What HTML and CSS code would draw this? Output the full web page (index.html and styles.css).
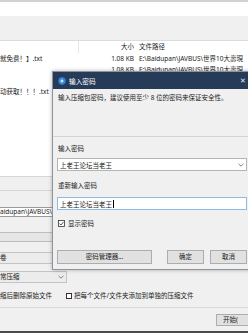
FILE: index.html
```html
<!DOCTYPE html>
<html lang="zh-CN">
<head>
<meta charset="utf-8">
<title>输入密码</title>
<link rel="stylesheet" href="styles.css">
</head>
<body>
<div class="app">
  <div class="top-strip"></div>
  <div class="white-band"></div>
  <div class="toolbar"></div>
  <div class="list">
    <div class="row head">
      <div class="c-name"></div>
      <div class="c-size">大小</div>
      <div class="c-path">文件路径</div>
    </div>
    <div class="row">
      <div class="c-name">就免费！】.txt</div>
      <div class="c-size">1.08 KB</div>
      <div class="c-path">E:\Baidupan\JAVBUS\世界10大壽現</div>
    </div>
    <div class="row">
      <div class="c-name"></div>
      <div class="c-size">1.08 KB</div>
      <div class="c-path">E:\Baidupan\JAVBUS\世界10大壽現</div>
    </div>
    <div class="row">
      <div class="c-name"></div>
      <div class="c-size"></div>
      <div class="c-path"></div>
    </div>
    <div class="row">
      <div class="c-name">动获取！！！.txt</div>
      <div class="c-size"></div>
      <div class="c-path"></div>
    </div>
  </div>
  <div class="status"></div>
  <div class="options">
    <div class="bg-input">aidupan\JAVBUS\世界10大壽現</div>
    <div class="bg-button"></div>
    <div class="bg-box">卷</div>
    <div class="bg-combo"><span>常压缩</span>
      <svg class="chev" viewBox="0 0 6 4" width="6" height="4"><path d="M0.5 0.8 L3 3.2 L5.5 0.8" fill="none" stroke="#777" stroke-width="0.9"/></svg>
    </div>
    <div class="bg-checks">
      <span class="bg-check-text">缩后删除原始文件</span>
      <span class="bg-checkbox"></span>
      <span>把每个文件/文件夹添加到单独的压缩文件</span>
    </div>
  </div>
  <div class="footer">
    <div class="start-btn">开始(</div>
  </div>
  <div class="taskbar"></div>
</div>

<div class="dialog">
  <div class="titlebar">
    <svg class="app-icon" viewBox="0 0 8 8" width="8" height="8">
      <circle cx="4" cy="4" r="3.7" fill="#2f86dc"/>
      <path d="M4 1.6 L4.6 3.4 L6.4 4 L4.6 4.6 L4 6.4 L3.4 4.6 L1.6 4 L3.4 3.4 Z" fill="#fff"/>
    </svg>
    <span class="title">输入密码</span>
    <span class="close">✕</span>
  </div>
  <div class="dlg-body">
    <div class="desc">输入压缩包密码，建议使用至少 8 位的密码来保证安全性。</div>
    <div class="sep"></div>
    <div class="label first">输入密码</div>
    <div class="combo">
      <span>上老王论坛当老王</span>
      <svg class="chev" viewBox="0 0 6 4" width="6" height="4"><path d="M0.5 0.8 L3 3.2 L5.5 0.8" fill="none" stroke="#777" stroke-width="0.9"/></svg>
    </div>
    <div class="label">重新输入密码</div>
    <div class="field"><span>上老王论坛当老王</span><span class="caret"></span></div>
    <div class="show-pw">
      <svg class="cb" viewBox="0 0 7 7" width="7" height="7">
        <rect x="0.5" y="0.5" width="6" height="6" fill="#fff" stroke="#333" stroke-width="0.8"/>
        <path d="M1.5 3.6 L2.9 5 L5.6 1.9" fill="none" stroke="#222" stroke-width="0.8"/>
      </svg>
      <span>显示密码</span>
    </div>
    <div class="buttons">
      <div class="btn wide">密码管理器...</div>
      <div class="btn ok">确定</div>
      <div class="btn">取消</div>
    </div>
  </div>
</div>
</body>
</html>
```
FILE: styles.css
```css
html, body {
  margin: 0;
  padding: 0;
}
body {
  width: 248px;
  height: 333px;
  overflow: hidden;
  position: relative;
  background: #f0f0f0;
  font-family: "Noto Sans", "Noto Sans CJK SC", sans-serif;
  font-size: 6.5px;
  color: #1c1c1c;
}
.app {
  display: flex;
  flex-direction: column;
  width: 248px;
  height: 333px;
}
.top-strip {
  height: 2px;
  background: #d2d2d2;
}
.white-band {
  height: 14px;
  background: #ffffff;
}
.toolbar {
  height: 24px;
  background: #f0f0f0;
  border-bottom: 1px solid #dcdcdc;
}
.list {
  height: 135px;
  background: #ffffff;
  overflow: hidden;
}
.row {
  display: flex;
  height: 11px;
  line-height: 11px;
  white-space: nowrap;
}
.row.head {
  height: 12px;
  line-height: 12px;
}
.c-name {
  width: 79px;
  overflow: hidden;
}
.head .c-name {
  border-right: 1px solid #e5e5e5;
  width: 78px;
}
.c-size {
  width: 55px;
  text-align: right;
}
.c-path {
  padding-left: 5px;
  overflow: hidden;
}
.status {
  height: 13px;
  border-top: 1px solid #d6d6d6;
  border-bottom: 1px solid #d6d6d6;
}
.options {
  display: flex;
  flex-direction: column;
  align-items: flex-start;
  padding-top: 16px;
}
.bg-input {
  box-sizing: border-box;
  width: 120px;
  height: 10px;
  line-height: 8px;
  background: #fff;
  border: 1px solid #9a9a9a;
  border-left: none;
  white-space: nowrap;
  overflow: hidden;
}
.bg-button {
  box-sizing: border-box;
  margin-top: 15px;
  width: 120px;
  height: 10px;
  background: #e6e6e6;
  border: 1px solid #bdbdbd;
  border-left: none;
}
.bg-box {
  box-sizing: border-box;
  margin-top: 10px;
  width: 120px;
  height: 12px;
  line-height: 10px;
  background: #ececec;
  border: 1px solid #c4c4c4;
  border-left: none;
}
.bg-combo {
  box-sizing: border-box;
  margin-top: 7px;
  width: 67px;
  height: 12px;
  line-height: 10px;
  background: #ececec;
  border: 1px solid #c4c4c4;
  border-left: none;
  display: flex;
  align-items: center;
  justify-content: space-between;
  padding-right: 2px;
}
.bg-checks {
  margin-top: 8px;
  height: 10px;
  line-height: 10px;
  display: flex;
  align-items: center;
  white-space: nowrap;
}
.bg-check-text {
  width: 66px;
}
.bg-checkbox {
  box-sizing: border-box;
  width: 6px;
  height: 6px;
  border: 1px solid #333;
  background: #fff;
  margin-right: 2px;
}
.footer {
  margin-top: 6px;
  border-top: 1px solid #dadada;
  flex: 1;
  display: flex;
  justify-content: flex-end;
  align-items: flex-start;
  padding-top: 6px;
  overflow: hidden;
}
.start-btn {
  box-sizing: border-box;
  width: 34px;
  margin-right: -2px;
  height: 12px;
  line-height: 10px;
  background: #e1e1e1;
  border: 1px solid #adadad;
  padding-left: 6px;
  white-space: nowrap;
}
.taskbar {
  height: 2px;
  background: #4a4a4a;
}

/* dialog window */
.dialog {
  position: absolute;
  left: 52px;
  top: 71px;
  width: 200px;
  height: 199px;
  box-sizing: border-box;
  background: #f0f0f0;
  border: 1px solid #8e949b;
  box-shadow: 0 0 4px rgba(0, 0, 0, 0.28);
  display: flex;
  flex-direction: column;
}
.titlebar {
  height: 17px;
  background: #253b57;
  color: #fff;
  display: flex;
  align-items: center;
  padding-left: 5px;
}
.app-icon {
  display: block;
}
.title {
  margin-left: 3px;
  font-size: 6.7px;
}
.close {
  margin-left: auto;
  width: 17px;
  text-align: center;
  font-size: 7px;
  color: #e8ecf0;
}
.dlg-body {
  padding: 0 4px;
  display: flex;
  flex-direction: column;
}
.desc {
  margin-top: 4px;
  height: 10px;
  line-height: 10px;
  padding-left: 1px;
  white-space: nowrap;
}
.sep {
  margin: 33px -4px 0;
  height: 1px;
  background: #d3d3d3;
}
.label {
  margin-top: 10px;
  height: 10px;
  line-height: 10px;
  padding-left: 1px;
}
.label.first {
  margin-top: 7px;
}
.combo, .field {
  box-sizing: border-box;
  margin-top: 4px;
  height: 13px;
  background: #fff;
  border: 1px solid #b4b4b4;
  display: flex;
  align-items: center;
  padding: 0 2px;
}
.field {
  margin-top: 6px;
  border-color: #8cbbe8;
}
.combo .chev {
  margin-left: auto;
}
.caret {
  width: 1px;
  height: 8px;
  background: #000;
  margin-left: 0.5px;
}
.show-pw {
  margin-top: 8px;
  height: 10px;
  display: flex;
  align-items: center;
  padding-left: 1px;
}
.show-pw span {
  margin-left: 3px;
}
.cb {
  display: block;
}
.buttons {
  margin-top: 22px;
  display: flex;
}
.btn {
  box-sizing: border-box;
  width: 37px;
  height: 14px;
  line-height: 12px;
  text-align: center;
  background: #e1e1e1;
  border: 1px solid #adadad;
}
.btn.wide {
  width: 95px;
}
.btn.ok {
  margin-left: auto;
  margin-right: 6px;
}
```
